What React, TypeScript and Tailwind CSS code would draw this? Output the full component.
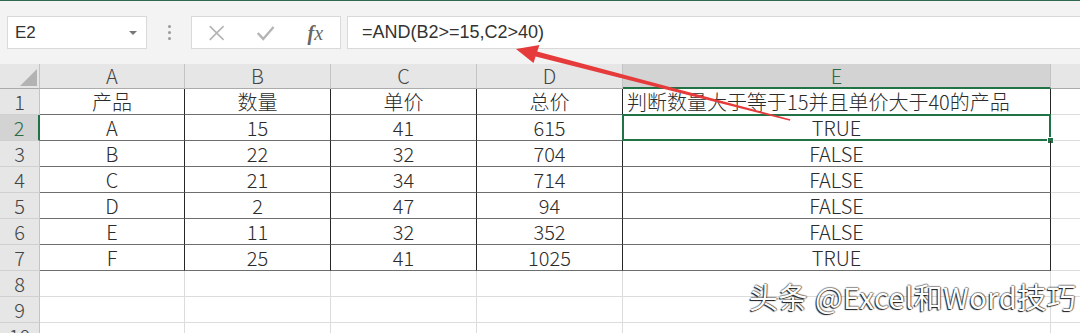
import { Fragment } from 'react';

const COLS = ['A', 'B', 'C', 'D', 'E'];

const ROWS: string[][] = [
  ['产品', '数量', '单价', '总价', '判断数量大于等于15并且单价大于40的产品'],
  ['A', '15', '41', '615', 'TRUE'],
  ['B', '22', '32', '704', 'FALSE'],
  ['C', '21', '34', '714', 'FALSE'],
  ['D', '2', '47', '94', 'FALSE'],
  ['E', '11', '32', '352', 'FALSE'],
  ['F', '25', '41', '1025', 'TRUE'],
  ['', '', '', '', ''],
  ['', '', '', '', ''],
  ['', '', '', '', ''],
];

function FormulaBar() {
  return (
    <div className="h-[63px] bg-[#f3f3f3] flex items-start pt-[15px] pl-[7px]">
      {/* 名称框 */}
      <div className="w-[140px] h-[33px] bg-white border border-[#d9d9d9] flex items-center justify-between pl-[7px] pr-[9px]">
        <span className="text-[17px] text-[#333] font-['Liberation_Sans',sans-serif]">E2</span>
        <span className="w-0 h-0 border-l-[4px] border-r-[4px] border-t-[4px] border-l-transparent border-r-transparent border-t-[#777]" />
      </div>

      <div className="w-[44px] h-[33px] flex flex-col items-center justify-center gap-[3px]">
        <span className="w-[3px] h-[3px] rounded-full bg-[#9a9a9a]" />
        <span className="w-[3px] h-[3px] rounded-full bg-[#9a9a9a]" />
        <span className="w-[3px] h-[3px] rounded-full bg-[#9a9a9a]" />
      </div>

      {/* 取消 / 确认 / fx */}
      <div className="w-[150px] h-[33px] bg-white border border-[#d9d9d9] flex items-center">
        <svg width="50" height="33" viewBox="0 0 50 33">
          <path d="M18 10 L32 24 M32 10 L18 24" stroke="#b4b4b4" strokeWidth="1.6" fill="none" />
        </svg>
        <svg width="50" height="33" viewBox="0 0 50 33">
          <path d="M17 17 L22.5 23 L33 11" stroke="#b4b4b4" strokeWidth="2.4" fill="none" />
        </svg>
        <span className="w-[50px] text-center text-[20px] italic text-[#666] font-['Liberation_Serif',serif]">
          <span className="font-bold">f</span>x
        </span>
      </div>

      {/* 编辑栏 */}
      <div className="ml-[6px] flex-1 h-[33px] bg-white border-y border-l border-[#d9d9d9] flex items-center pl-[14px]">
        <span className="text-[18px] text-[#333] font-['Liberation_Sans',sans-serif]">=AND(B2&gt;=15,C2&gt;40)</span>
      </div>
    </div>
  );
}

function Sheet() {
  return (
    <div className="grid grid-cols-[40px_145px_146px_146px_146px_428px_1fr] font-['Noto_Sans_CJK_SC',sans-serif] font-light">
      {/* 左上角 */}
      <div className="h-[25px] bg-[#e6e6e6] border-r border-b border-r-[#c4c4c4] border-b-[#ababab] flex items-end justify-end pr-[2px] pb-[2px]">
        <svg width="17" height="17" viewBox="0 0 17 17">
          <polygon points="17,0 17,17 0,17" fill="#b3b3b3" />
        </svg>
      </div>
      {COLS.map((c) => (
        <div
          key={c}
          className={
            c === 'E'
              ? 'h-[25px] bg-[#d3d3d3] border-r border-b-2 border-r-[#c4c4c4] border-b-[#217346] flex items-center justify-center text-[20px] leading-[22px] text-[#2a6a45]'
              : 'h-[25px] bg-[#e6e6e6] border-r border-b border-r-[#c4c4c4] border-b-[#ababab] flex items-center justify-center text-[20px] leading-[22px] text-[#444]'
          }
        >
          {c}
        </div>
      ))}
      <div className="h-[25px] bg-[#e6e6e6] border-b border-b-[#ababab]" />

      {ROWS.map((row, r) => {
        const inTable = r < 7;
        const selected = r === 1;
        return (
          <Fragment key={r}>
            <div
              className={
                selected
                  ? 'h-[26px] bg-[#d3d3d3] border-r-2 border-b border-r-[#217346] border-b-[#d0d0d0] flex items-center justify-center text-[20px] leading-[22px] text-[#2a6a45]'
                  : 'h-[26px] bg-[#e6e6e6] border-r border-b border-r-[#c4c4c4] border-b-[#d0d0d0] flex items-center justify-center text-[20px] leading-[22px] text-[#444]'
              }
            >
              {r + 1}
            </div>
            {row.map((text, c) => (
              <div
                key={c}
                className={
                  (inTable
                    ? 'relative h-[26px] border-r border-b border-r-[#262626] border-b-[#6e6e6e] '
                    : 'relative h-[26px] border-r border-b border-r-[#dcdcdc] border-b-[#dcdcdc] ') +
                  (r === 0 && c === 4
                    ? 'flex items-center justify-start pl-[4px] text-[20px] leading-[22px] text-[#2b2b2b] whitespace-nowrap'
                    : 'flex items-center justify-center text-[20px] leading-[22px] text-[#2b2b2b]')
                }
              >
                {text}
                {selected && c === 4 && (
                  <>
                    <span className="absolute -left-px -top-px -right-px -bottom-px border-2 border-[#217346]" />
                    <span className="absolute right-[-4px] bottom-[-4px] w-[7px] h-[7px] bg-[#217346] border border-white" />
                  </>
                )}
              </div>
            ))}
            <div className="h-[26px] border-b border-b-[#dcdcdc]" />
          </Fragment>
        );
      })}
    </div>
  );
}

export default function App() {
  return (
    <div className="relative w-[1080px] h-[333px] overflow-hidden bg-white">
      <div className="h-px bg-[#2f6a50]" />
      <FormulaBar />
      <Sheet />

      {/* 红色箭头 */}
      <svg className="absolute left-0 top-0 pointer-events-none" width="1080" height="333" viewBox="0 0 1080 333">
        <polygon
          points="516,49 533.5,63 535.6,56.5 790,120.8 790.3,119.3 537.2,51.6 539.5,45"
          fill="#e63b3b"
        />
      </svg>

      {/* 水印 */}
      <div className="absolute left-[749px] top-[282px] text-[29px] leading-none text-white tracking-[0.5px] font-['Noto_Sans_CJK_SC',sans-serif] [text-shadow:-1px_1px_1px_rgba(0,0,0,0.9),1px_0_1px_rgba(0,0,0,0.6),0_-1px_1px_rgba(0,0,0,0.4)] whitespace-nowrap">
        头条 @Excel和Word技巧
      </div>
    </div>
  );
}
